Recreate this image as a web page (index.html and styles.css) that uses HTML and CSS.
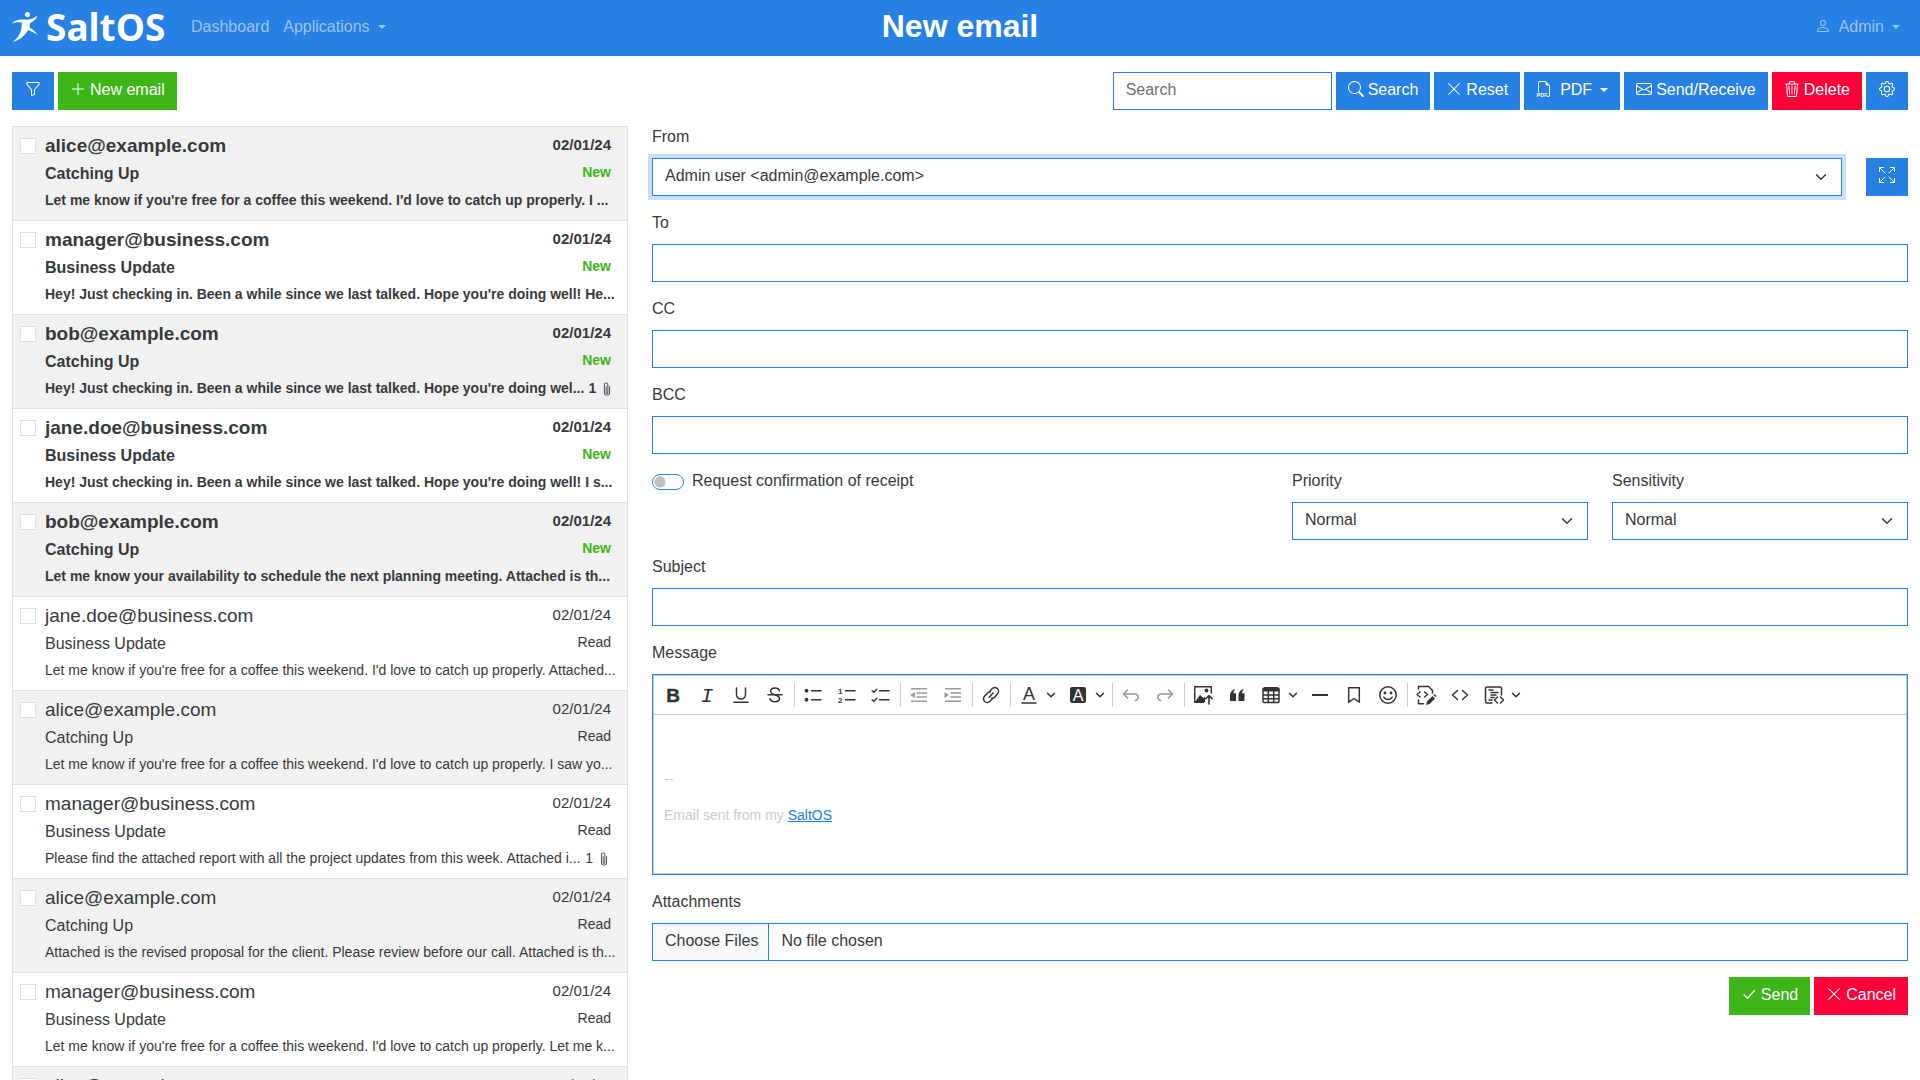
FILE: index.html
```html
<!DOCTYPE html>
<html lang="en">
<head>
<meta charset="utf-8">
<meta name="viewport" content="width=device-width, initial-scale=1">
<title>New email - SaltOS</title>
<link rel="stylesheet" href="styles.css">
</head>
<body>
<svg class="sprite" aria-hidden="true">
  <symbol id="x" viewBox="0 0 16 16"><path d="M2.15 2.15a.5.5 0 0 1 .7 0L8 7.3l5.15-5.15a.5.5 0 0 1 .7.7L8.7 8l5.15 5.15a.5.5 0 0 1-.7.7L8 8.7l-5.15 5.15a.5.5 0 0 1-.7-.7L7.3 8 2.15 2.85a.5.5 0 0 1 0-.7z"/></symbol>
  <symbol id="clip" viewBox="0 0 16 16"><path d="M4.5 3a2.5 2.5 0 0 1 5 0v9a1.5 1.5 0 0 1-3 0V5a.5.5 0 0 1 1 0v7a.5.5 0 0 0 1 0V3a1.5 1.5 0 1 0-3 0v9a2.5 2.5 0 0 0 5 0V5a.5.5 0 0 1 1 0v7a3.5 3.5 0 1 1-7 0z"/></symbol>
  <symbol id="caret" viewBox="0 0 10 10"><path d="M1.5 3.2 5 6.8l3.500-3.600" fill="none" stroke="currentColor" stroke-width="1.500" stroke-linecap="round" stroke-linejoin="round"/></symbol>
</svg>

<header class="navbar">
  <a class="brand" href="#">
    <svg class="brand-mark" viewBox="0 0 26 30" aria-hidden="true"><circle cx="15.500" cy="2.600" r="2.500"/><path d="M0 11.500C3 8 7 7.200 12 7.600c5 .3 9-.6 13.500-4.100-1.300 4-4 6.300-7.500 7.500l-.4 4.500c3.200 2 5.800 4 8.200 7.500-3.200-2.200-6.200-3.700-9.800-4.700C12.500 24 7.500 28.500.5 30c5.300-4 8.300-8.500 9-14.500l.4-4.800C6.500 10 3.200 10.200 0 11.500z"/></svg>
    <span>SaltOS</span>
  </a>
  <nav class="nav">
    <a href="#">Dashboard</a>
    <a class="dropdown" href="#">Applications</a>
  </nav>
  <h1>New email</h1>
  <nav class="nav nav-end">
    <a class="dropdown" href="#"><svg class="icon user" viewBox="0 0 16 16"><path d="M8 8a3 3 0 1 0 0-6 3 3 0 0 0 0 6m2-3a2 2 0 1 1-4 0 2 2 0 0 1 4 0m4 8c0 1-1 1-1 1H3s-1 0-1-1 1-4 6-4 6 3 6 4m-1 0c0-.25-.15-1-.83-1.670C11.520 10.680 10.290 10 8 10s-3.520.68-4.170 1.330C3.150 12 3 12.750 3 13z"/></svg>Admin</a>
  </nav>
</header>

<div class="actions">
  <button class="btn" type="button" aria-label="Filter"><svg class="icon" viewBox="0 0 16 16"><path d="M1.500 1.500A.5.5 0 0 1 2 1h12a.5.5 0 0 1 .5.5v2a.5.5 0 0 1-.13.33L10 8.690V13.500a.5.5 0 0 1-.34.47l-3 1A.5.5 0 0 1 6 14.500V8.690L1.630 3.830A.5.5 0 0 1 1.500 3.500zm1 .5v1.310l4.370 4.860A.5.5 0 0 1 7 8.500v5.310l2-.67V8.500a.5.5 0 0 1 .13-.33L13.500 3.310V2z"/></svg></button>
  <button class="btn success" type="button"><svg class="icon" viewBox="0 0 16 16"><path d="M8 2a.5.5 0 0 1 .5.5v5h5a.5.5 0 0 1 0 1h-5v5a.5.5 0 0 1-1 0v-5h-5a.5.5 0 0 1 0-1h5v-5A.5.5 0 0 1 8 2"/></svg>New email</button>
  <input class="control search" type="search" placeholder="Search" aria-label="Search">
  <button class="btn" type="button"><svg class="icon" viewBox="0 0 16 16"><path d="M11.740 10.340a6.500 6.500 0 1 0-1.400 1.400l.1.110 3.850 3.850a1 1 0 0 0 1.420-1.410l-3.850-3.850zM12 6.500a5.500 5.500 0 1 1-11 0 5.500 5.500 0 0 1 11 0"/></svg>Search</button>
  <button class="btn" type="button"><svg class="icon"><use href="#x"/></svg>Reset</button>
  <button class="btn dropdown" type="button"><svg class="icon pdf" viewBox="0 0 16 16"><path d="M14 4.500V14a2 2 0 0 1-2 2h-1v-1h1a1 1 0 0 0 1-1V4.500h-2A1.500 1.500 0 0 1 9.500 3V1H4a1 1 0 0 0-1 1v9H2V2a2 2 0 0 1 2-2h5.500z"/><text x="0.500" y="16" font-size="5.500" font-weight="700" font-family="Liberation Sans, sans-serif">PDF</text></svg>PDF</button>
  <button class="btn" type="button"><svg class="icon" viewBox="0 0 16 16"><path d="M0 4a2 2 0 0 1 2-2h12a2 2 0 0 1 2 2v8a2 2 0 0 1-2 2H2a2 2 0 0 1-2-2zm2-1a1 1 0 0 0-1 1v.22l7 4.200 7-4.200V4a1 1 0 0 0-1-1zm13 2.380-4.710 2.830L15 11.110zm-.03 6.880L9.330 8.790 8 9.580l-1.330-.79-5.640 3.470A1 1 0 0 0 2 13h12a1 1 0 0 0 .97-.74M1 11.110l4.710-2.900L1 5.380z"/></svg>Send/Receive</button>
  <button class="btn danger" type="button"><svg class="icon" viewBox="0 0 16 16"><path d="M6.500 1h3a.5.5 0 0 1 .5.5v1H6v-1a.5.5 0 0 1 .5-.5M11 2.500v-1A1.500 1.500 0 0 0 9.500 0h-3A1.500 1.500 0 0 0 5 1.500v1H1.500a.5.5 0 0 0 0 1h.54l.85 10.660A2 2 0 0 0 4.890 16h6.220a2 2 0 0 0 2-1.840L13.960 3.500h.54a.5.5 0 0 0 0-1zm1.960 1-.85 10.580a1 1 0 0 1-1 .92H4.890a1 1 0 0 1-1-.92L3.040 3.500z"/><path d="M5 5 5.500 13M8 5V13M11 5 10.500 13" fill="none" stroke="currentColor" stroke-linecap="round"/></svg>Delete</button>
  <button class="btn" type="button" aria-label="Settings"><svg class="icon" viewBox="0 0 16 16"><path d="M8 4.750a3.250 3.250 0 1 0 0 6.500 3.250 3.250 0 0 0 0-6.500M5.750 8a2.250 2.250 0 1 1 4.500 0 2.250 2.250 0 0 1-4.500 0"/><path d="M9.800 1.340c-.53-1.790-3.060-1.790-3.590 0l-.1.320a.87.87 0 0 1-1.250.52l-.29-.16C2.930 1.130 1.130 2.930 2.020 4.570l.16.290a.87.87 0 0 1-.52 1.250l-.32.100c-1.790.53-1.790 3.060 0 3.590l.32.100a.87.87 0 0 1 .52 1.250l-.16.290c-.89 1.640.91 3.440 2.550 2.540l.29-.16a.87.87 0 0 1 1.260.52l.09.320c.53 1.790 3.060 1.790 3.590 0l.1-.32a.87.87 0 0 1 1.250-.52l.29.160c1.640.89 3.440-.91 2.540-2.550l-.16-.29a.87.87 0 0 1 .52-1.250l.32-.1c1.790-.53 1.790-3.060 0-3.590l-.32-.09a.87.87 0 0 1-.52-1.260l.16-.29c.89-1.640-.91-3.440-2.550-2.540l-.29.16a.87.87 0 0 1-1.250-.52zm-2.630.280c.24-.83 1.420-.83 1.660 0l.1.320a1.870 1.870 0 0 0 2.690 1.110l.29-.16c.76-.41 1.590.42 1.180 1.180l-.16.290a1.870 1.870 0 0 0 1.110 2.690l.32.100c.83.240.83 1.420 0 1.660l-.32.100a1.870 1.870 0 0 0-1.110 2.690l.16.290c.41.760-.42 1.590-1.180 1.180l-.29-.16a1.870 1.870 0 0 0-2.690 1.120l-.1.320c-.24.830-1.420.830-1.660 0l-.1-.32a1.870 1.870 0 0 0-2.690-1.120l-.29.160c-.76.410-1.590-.42-1.180-1.180l.16-.29a1.870 1.870 0 0 0-1.110-2.690l-.32-.1c-.83-.24-.83-1.420 0-1.660l.32-.1a1.870 1.870 0 0 0 1.110-2.690l-.16-.29c-.41-.76.420-1.590 1.180-1.180l.29.160a1.870 1.870 0 0 0 2.690-1.110z"/></svg></button>
</div>

<main class="columns">
  <ul class="mails">
    <li class="mail unread"><input type="checkbox" aria-label="Select mail"><div class="mail-body">
      <div class="line"><a class="from" href="#">alice@example.com</a><time>02/01/24</time></div>
      <div class="line"><span>Catching Up</span><span class="state">New</span></div>
      <div class="line small"><p>Let me know if you're free for a coffee this weekend. I'd love to catch up properly. I ...</p></div></div></li>
    <li class="mail unread"><input type="checkbox" aria-label="Select mail"><div class="mail-body">
      <div class="line"><a class="from" href="#">manager@business.com</a><time>02/01/24</time></div>
      <div class="line"><span>Business Update</span><span class="state">New</span></div>
      <div class="line small"><p>Hey! Just checking in. Been a while since we last talked. Hope you're doing well! He...</p></div></div></li>
    <li class="mail unread"><input type="checkbox" aria-label="Select mail"><div class="mail-body">
      <div class="line"><a class="from" href="#">bob@example.com</a><time>02/01/24</time></div>
      <div class="line"><span>Catching Up</span><span class="state">New</span></div>
      <div class="line small"><p>Hey! Just checking in. Been a while since we last talked. Hope you're doing wel...</p><span class="files">1<svg><use href="#clip"/></svg></span></div></div></li>
    <li class="mail unread"><input type="checkbox" aria-label="Select mail"><div class="mail-body">
      <div class="line"><a class="from" href="#">jane.doe@business.com</a><time>02/01/24</time></div>
      <div class="line"><span>Business Update</span><span class="state">New</span></div>
      <div class="line small"><p>Hey! Just checking in. Been a while since we last talked. Hope you're doing well! I s...</p></div></div></li>
    <li class="mail unread"><input type="checkbox" aria-label="Select mail"><div class="mail-body">
      <div class="line"><a class="from" href="#">bob@example.com</a><time>02/01/24</time></div>
      <div class="line"><span>Catching Up</span><span class="state">New</span></div>
      <div class="line small"><p>Let me know your availability to schedule the next planning meeting. Attached is th...</p></div></div></li>
    <li class="mail"><input type="checkbox" aria-label="Select mail"><div class="mail-body">
      <div class="line"><a class="from" href="#">jane.doe@business.com</a><time>02/01/24</time></div>
      <div class="line"><span>Business Update</span><span class="state">Read</span></div>
      <div class="line small"><p>Let me know if you're free for a coffee this weekend. I'd love to catch up properly. Attached...</p></div></div></li>
    <li class="mail"><input type="checkbox" aria-label="Select mail"><div class="mail-body">
      <div class="line"><a class="from" href="#">alice@example.com</a><time>02/01/24</time></div>
      <div class="line"><span>Catching Up</span><span class="state">Read</span></div>
      <div class="line small"><p>Let me know if you're free for a coffee this weekend. I'd love to catch up properly. I saw yo...</p></div></div></li>
    <li class="mail"><input type="checkbox" aria-label="Select mail"><div class="mail-body">
      <div class="line"><a class="from" href="#">manager@business.com</a><time>02/01/24</time></div>
      <div class="line"><span>Business Update</span><span class="state">Read</span></div>
      <div class="line small"><p>Please find the attached report with all the project updates from this week. Attached i...</p><span class="files">1<svg><use href="#clip"/></svg></span></div></div></li>
    <li class="mail"><input type="checkbox" aria-label="Select mail"><div class="mail-body">
      <div class="line"><a class="from" href="#">alice@example.com</a><time>02/01/24</time></div>
      <div class="line"><span>Catching Up</span><span class="state">Read</span></div>
      <div class="line small"><p>Attached is the revised proposal for the client. Please review before our call. Attached is th...</p></div></div></li>
    <li class="mail"><input type="checkbox" aria-label="Select mail"><div class="mail-body">
      <div class="line"><a class="from" href="#">manager@business.com</a><time>02/01/24</time></div>
      <div class="line"><span>Business Update</span><span class="state">Read</span></div>
      <div class="line small"><p>Let me know if you're free for a coffee this weekend. I'd love to catch up properly. Let me k...</p></div></div></li>
    <li class="mail"><input type="checkbox" aria-label="Select mail"><div class="mail-body">
      <div class="line"><a class="from" href="#">alice@example.com</a><time>02/01/24</time></div>
      <div class="line"><span>Catching Up</span><span class="state">Read</span></div>
      <div class="line small"><p>Let me know if you're free for a coffee this weekend.</p></div></div></li>
  </ul>

  <form class="compose">
    <div class="row from-row">
      <div class="field"><label for="from">From</label><select class="control focused" id="from"><option>Admin user &lt;admin@example.com&gt;</option></select></div>
      <button class="btn" type="button" aria-label="Full screen"><svg class="icon" viewBox="0 0 16 16"><path d="M6.300 9.700 1 15M.5 11v4.500H5M9.700 9.700 15 15M15.500 11v4.500H11M6.300 6.300 1 1M.5 5V.5H5M9.700 6.300 15 1M15.500 5V.5H11" fill="none" stroke="currentColor"/></svg></button>
    </div>
    <div class="field"><label for="to">To</label><input class="control" id="to" type="text"></div>
    <div class="field"><label for="cc">CC</label><input class="control" id="cc" type="text"></div>
    <div class="field"><label for="bcc">BCC</label><input class="control" id="bcc" type="text"></div>
    <div class="row options">
      <div class="switch"><input type="checkbox" role="switch" id="receipt"><label for="receipt">Request confirmation of receipt</label></div>
      <div class="field"><label for="priority">Priority</label><select class="control" id="priority"><option>Normal</option></select></div>
      <div class="field"><label for="sensitivity">Sensitivity</label><select class="control" id="sensitivity"><option>Normal</option></select></div>
    </div>
    <div class="field"><label for="subject">Subject</label><input class="control" id="subject" type="text"></div>
    <div class="field">
      <label id="message-label">Message</label>
      <div class="editor">
        <div class="tools" role="toolbar" aria-label="Formatting">
          <button type="button" aria-label="Bold"><svg viewBox="0 0 20 20"><text x="10" y="17" text-anchor="middle" font-size="19" font-weight="700" stroke="currentColor" stroke-width=".4">B</text></svg></button>
          <button type="button" aria-label="Italic"><svg viewBox="0 0 20 20"><text class="mono" x="10" y="17" text-anchor="middle" font-size="21" font-style="italic">I</text></svg></button>
          <button type="button" aria-label="Underline"><svg viewBox="0 0 20 20"><path class="s" d="M5.500 3v6.500a4.500 4.500 0 0 0 9 0V3M3 17.300h14"/></svg></button>
          <button type="button" aria-label="Strikethrough"><svg viewBox="0 0 20 20"><path class="s" d="M14.500 5.700C13.500 3.500 11.800 3 10 3 7.500 3 5.700 4.200 5.700 6.300c0 1.800 1.300 2.800 4.300 3.700 3 .8 4.500 1.700 4.500 3.500 0 2-2 3.200-4.500 3.200s-4.300-1-5-3M3 9.700h14"/></svg></button>
          <i></i>
          <button type="button" aria-label="Bulleted list"><svg viewBox="0 0 20 20"><path class="s" d="M8.500 5.700h9.500M8.500 14.700h9.500"/><circle cx="3.500" cy="5.700" r="1.900"/><circle cx="3.500" cy="14.700" r="1.900"/></svg></button>
          <button type="button" aria-label="Numbered list"><svg viewBox="0 0 20 20"><path class="s" d="M8.500 5.700h9.500M8.500 14.700h9.500"/><text x="1" y="8.500" font-size="8" font-weight="700">1</text><text x="1" y="17.700" font-size="8" font-weight="700">2</text></svg></button>
          <button type="button" aria-label="To-do list"><svg viewBox="0 0 20 20"><path class="s" d="M8.500 5.700h9.500M8.500 14.700h9.500M1.200 5.700l1.600 1.500 3-3M1.200 14.700l1.600 1.500 3-3"/></svg></button>
          <i></i>
          <button type="button" disabled aria-label="Decrease indent"><svg viewBox="0 0 20 20"><path class="s" d="M2.500 3.700h15M8 7.900h9.500M8 12h9.500M2.500 16.200h15"/><path d="M1 10l5-3v6z"/></svg></button>
          <button type="button" disabled aria-label="Increase indent"><svg viewBox="0 0 20 20"><path class="s" d="M2.500 3.700h15M8 7.900h9.500M8 12h9.500M2.500 16.200h15"/><path d="M6 10 1.500 7v6z"/></svg></button>
          <i></i>
          <button type="button" aria-label="Link"><svg viewBox="0 0 20 20"><path class="s" d="M8.200 12.300 12 8M8.500 6.700l2.600-2.900a3.700 3.700 0 0 1 5.500 5l-2.800 3.100a3.700 3.700 0 0 1-3 1.200M11.700 13.300l-2.700 3a3.700 3.700 0 0 1-5.500-5l2.800-3.100a3.700 3.700 0 0 1 3-1.200"/></svg></button>
          <i></i>
          <button type="button" class="split" aria-label="Font color"><svg viewBox="0 0 20 20"><path class="s" d="M3 18h14"/><text x="10" y="15" text-anchor="middle" font-size="18">A</text></svg><svg class="arrow"><use href="#caret"/></svg></button>
          <button type="button" class="split" aria-label="Highlight color"><svg viewBox="0 0 20 20"><rect x="2" y="2" width="16" height="16" rx="2"/><text x="10" y="16" text-anchor="middle" font-size="16" fill="#fff">A</text></svg><svg class="arrow"><use href="#caret"/></svg></button>
          <i></i>
          <button type="button" disabled aria-label="Undo"><svg viewBox="0 0 20 20"><path class="s" d="M6.500 5 2.500 9l4 4M2.700 9h10.500c2.500 0 4 1.300 4 3.300 0 1.700-1 2.700-2.700 3.200"/></svg></button>
          <button type="button" disabled aria-label="Redo"><svg viewBox="0 0 20 20"><path class="s" d="m13.500 5 4 4-4 4M17.300 9H6.800c-2.500 0-4 1.300-4 3.300 0 1.700 1 2.700 2.700 3.200"/></svg></button>
          <i></i>
          <button type="button" aria-label="Insert image"><svg viewBox="0 0 20 20"><path class="s" d="M18.300 8V1.700H1.700v15.600h9"/><path d="m2 17 5-7 3.500 3 1.500-1.500V17z"/><circle cx="13.500" cy="5.500" r="1.900"/><path class="s" d="M16 19v-8M12.800 13.800 16 10.600l3.200 3.200"/></svg></button>
          <button type="button" aria-label="Block quote"><svg viewBox="0 0 20 20"><path d="M3 10.500c0-3.500 2-5.700 5.500-6.500-1.500 1.700-2 2.800-2 4.200H9V16H3zM11.500 10.500c0-3.500 2-5.700 5.500-6.500-1.500 1.700-2 2.800-2 4.200h2.500V16h-6z"/></svg></button>
          <button type="button" class="split" aria-label="Insert table"><svg viewBox="0 0 20 20"><path d="M2 4a2 2 0 0 1 2-2h12a2 2 0 0 1 2 2v2.500H2z"/><path class="s" d="M2 3.500v13c0 .6.400 1 1 1h14c.6 0 1-.4 1-1v-13M2 10h16M2 13.700h16M7.300 6v11.500M12.700 6v11.500"/></svg><svg class="arrow"><use href="#caret"/></svg></button>
          <button type="button" aria-label="Horizontal line"><svg viewBox="0 0 20 20"><path d="M2 9h16v2H2z"/></svg></button>
          <button type="button" aria-label="Bookmark"><svg viewBox="0 0 20 20"><path class="s" d="M4.700 2.700h10.600v14.500L10 13.500l-5.300 3.700z"/></svg></button>
          <button type="button" aria-label="Emoji"><svg viewBox="0 0 20 20"><circle class="s" cx="10" cy="10" r="8.200"/><circle cx="7" cy="8" r="1.400"/><circle cx="13" cy="8" r="1.400"/><path class="s" d="M5.800 12.200c1.900 2.900 6.500 2.900 8.400 0"/></svg></button>
          <i></i>
          <button type="button" aria-label="Edit HTML"><svg viewBox="0 0 20 20"><path class="s" d="M2.500 4V1.500h10l4 4V8M2.500 15v3.700h5M4 7 1 9.500 4 12M8.500 7l3 2.500-3 2.500"/><path d="m11 16.500 5.500-5.500 2.500 2.500-5.500 5.500-3.500 1zM17.500 10l1-1 2 2-1 1z"/></svg></button>
          <button type="button" aria-label="Source"><svg viewBox="0 0 20 20"><path class="s" d="M7.500 5.500 2.500 10l5 4.500M12.500 5.500l5 4.500-5 4.500"/></svg></button>
          <button type="button" class="split" aria-label="Insert template"><svg viewBox="0 0 20 20"><path class="s" d="M8 18H3a1.500 1.500 0 0 1-1.500-1.500v-13A1.500 1.500 0 0 1 3 2h13a1.500 1.500 0 0 1 1.500 1.500V10M5 5h4M7 7.500h7M7 10h5M7 12.500h3M5 15h3"/><path class="s" d="m13.500 12-3 3 3 3M16.500 12l3 3-3 3"/></svg><svg class="arrow"><use href="#caret"/></svg></button>
        </div>
        <div class="content" contenteditable="true" role="textbox" aria-multiline="true" aria-labelledby="message-label">
          <p><br></p>
          <p>--</p>
          <p>Email sent from my <a href="#">SaltOS</a></p>
        </div>
      </div>
    </div>
    <div class="field"><label for="attachments">Attachments</label><input class="control file" id="attachments" type="file" multiple></div>
    <div class="submit">
      <button class="btn success" type="submit"><svg class="icon" viewBox="0 0 16 16"><path d="m3 8.700 3.500 3.500 7-7.700" fill="none" stroke="currentColor" stroke-width="1.300" stroke-linecap="round"/></svg>Send</button>
      <button class="btn danger" type="button"><svg class="icon"><use href="#x"/></svg>Cancel</button>
    </div>
  </form>
</main>
</body>
</html>
```
FILE: styles.css
```css
:root {
  --primary: #2780e3;
  --success: #3fb618;
  --danger: #ff0039;
  --text: #373a3c;
  --line: #dee2e6;
}

* { box-sizing: border-box; }

html { scrollbar-width: none; }

body {
  margin: 0;
  font: 16px/24px "Liberation Sans", Arial, sans-serif;
  color: var(--text);
  background: #fff;
}

button, input, select { font: inherit; color: inherit; }
p, h1, ul { margin: 0; padding: 0; }
.sprite { display: none; }

.icon {
  width: 16px;
  height: 16px;
  margin-bottom: 2px;
  fill: currentColor;
  flex: none;
}

.dropdown::after {
  content: "";
  margin-left: 5px;
  border: 4px solid transparent;
  border-top-color: currentColor;
  border-bottom: 0;
}

/* Top bar */
.navbar {
  display: grid;
  grid-template-columns: 1fr auto 1fr;
  align-items: center;
  height: 56px;
  padding: 0 12px 2px;
  background: var(--primary);
  color: #fff;
}

.brand {
  grid-area: 1 / 1;
  justify-self: start;
  display: flex;
  align-items: center;
  gap: 8px;
  color: #fff;
  text-decoration: none;
  font: 700 37px/48px "Noto Sans", sans-serif;
}

.brand-mark { width: 26px; height: 30px; fill: #fff; }

.nav { display: flex; gap: 14px; }
.brand + .nav { grid-area: 1 / 1; padding-left: 179px; }

.nav a {
  display: flex;
  align-items: center;
  color: rgba(255, 255, 255, .55);
  text-decoration: none;
}

.nav .dropdown::after { margin-left: 8px; }
.nav .user { margin-right: 8px; }
.nav-end { justify-content: flex-end; padding-right: 8px; }
.navbar h1 { font-size: 32px; line-height: 40px; padding-bottom: 2px; }

/* Buttons and inputs */
.btn {
  display: flex;
  align-items: center;
  justify-content: center;
  gap: 4px;
  height: 38px;
  min-width: 42px;
  padding: 5px 12px 7px;
  border: 0;
  background: var(--primary);
  color: #fff;
  white-space: nowrap;
}

.btn.success { background: var(--success); }
.btn.danger { background: var(--danger); }
.btn .pdf { margin-right: 4px; }
.btn.dropdown::after { margin-left: 4px; }

.control {
  display: block;
  width: 100%;
  height: 38px;
  padding: 5px 12px 7px;
  border: 1px solid var(--primary);
  border-radius: 0;
  background: #fff;
  outline: 0;
}

.control::placeholder { color: #6c6e70; opacity: 1; }

select.control {
  appearance: none;
  padding-right: 36px;
  background: #fff url("data:image/svg+xml,%3Csvg xmlns='http://www.w3.org/2000/svg' viewBox='0 0 16 16'%3E%3Cpath fill='none' stroke='%23373a3c' stroke-linecap='round' stroke-linejoin='round' stroke-width='2' d='m2 5 6 6 6-6'/%3E%3C/svg%3E") no-repeat right 14px center / 12px 12px;
}

.control.focused { box-shadow: 0 0 0 4px rgba(39, 128, 227, .25); }

.actions { display: flex; gap: 4px; padding: 16px 12px; }
.actions .search { width: 219px; margin-left: auto; appearance: none; }

.columns {
  display: grid;
  grid-template-columns: minmax(0, 616fr) minmax(0, 1256fr);
  gap: 24px;
  align-items: start;
  padding: 0 12px;
}

/* Mail list */
.mails { list-style: none; border: 1px solid var(--line); border-bottom: 0; }

.mail {
  display: flex;
  gap: 9px;
  padding: 7px 16px 9px 7px;
  border-bottom: 1px solid var(--line);
}

.mail:nth-child(odd) { background: #f1f1f1; }
.mail.unread { font-weight: 700; }

.mail input {
  appearance: none;
  flex: none;
  width: 16px;
  height: 16px;
  margin: 4px 0 0;
  border: 1px solid var(--line);
  background: #fff;
}

.mail-body { display: grid; gap: 4px; flex: 1; min-width: 0; }
.line { display: flex; justify-content: space-between; min-width: 0; }
.from { font-size: 19px; color: inherit; text-decoration: none; }
.mail time { font-size: 15px; line-height: 21px; }
.state, .small { font-size: 14px; line-height: 21px; }
.small p { flex: none; white-space: nowrap; }
.unread .state { color: var(--success); }
.files { display: flex; align-items: center; gap: 4px; padding-left: 4px; }
.files svg { width: 14px; height: 14px; fill: currentColor; }

/* Compose form */
.compose { display: grid; gap: 16px; padding-bottom: 24px; }
.field label, .switch label { display: block; line-height: 22px; }
.field label { padding-bottom: 2px; margin-bottom: 8px; }
.row { display: grid; column-gap: 24px; }
.from-row { grid-template-columns: minmax(0, 1fr) 42px; align-items: end; }
.options { grid-template-columns: minmax(0, 616fr) minmax(0, 296fr) minmax(0, 296fr); }
.switch { display: flex; gap: 8px; }

.switch input {
  appearance: none;
  width: 32px;
  height: 16px;
  margin: 4px 0 0;
  border: 1px solid var(--primary);
  border-radius: 8px;
  background: radial-gradient(circle at 7px 7px, #bfbfbf 5px, transparent 6px);
}

.file { padding: 0; line-height: 34px; }

.file::file-selector-button {
  height: 36px;
  margin: 0 12px 0 0;
  padding: 0 10px 2px 12px;
  border: 0;
  border-right: 1px solid var(--primary);
  background: #f8f9fa;
  color: inherit;
  font: inherit;
}

.submit { display: flex; justify-content: flex-end; gap: 4px; }

/* Message editor */
.editor { border: 1px solid var(--primary); }

.tools {
  display: flex;
  flex-wrap: wrap;
  gap: 4px;
  padding: 4px;
  border: 1px solid #ccced1;
}

.tools i { width: 1px; height: 24px; margin: 3px -1px 0 0; background: #ccced1; }

.tools button {
  display: flex;
  align-items: center;
  width: 30px;
  height: 30px;
  padding: 0 5px;
  border: 0;
  background: none;
  color: #333;
}

.tools button:disabled { color: #999; }
.tools button.split { width: 45px; gap: 7px; }
.tools svg { flex: none; width: 20px; height: 20px; fill: currentColor; overflow: visible; }
.tools .arrow { width: 10px; height: 10px; }
.tools .s { fill: none; stroke: currentColor; stroke-width: 1.500; stroke-linecap: round; stroke-linejoin: round; }
.tools .mono { font-family: "Liberation Mono", monospace; }

.content {
  min-height: 159px;
  padding: 18px 10px 16px;
  border: 1px solid #ccced1;
  border-top: 0;
  font-size: 14px;
  line-height: 20px;
  color: #ccc;
  outline: 0;
}

.content p { margin-bottom: 16px; }
.content a { color: var(--primary); }
```
